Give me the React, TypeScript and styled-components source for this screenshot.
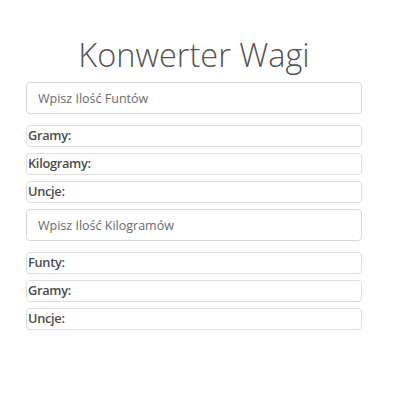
import styled, { createGlobalStyle } from 'styled-components'

const GlobalStyle = createGlobalStyle`
	body {
		margin: 0;
		background: #fff;
		font-family: 'Open Sans', 'Liberation Sans', sans-serif;
	}
`

const Page = styled.div`
	width: 336px;
	padding: 33px 0 0 26px;
	display: flex;
	flex-direction: column;
`

const Title = styled.h1`
	margin: 0 0 6px;
	text-align: center;
	font-weight: 300;
	font-size: 32.5px;
	line-height: 43px;
	color: #555;
`

const Section = styled.div`
	display: flex;
	flex-direction: column;
	gap: 6px;
	margin-bottom: 6px;
`

const Input = styled.input`
	box-sizing: border-box;
	height: 32px;
	width: 100%;
	margin-bottom: 5px;
	padding: 0 11px;
	border: 1px solid #d6d9dc;
	border-radius: 4px;
	font-family: inherit;
	font-size: 12.5px;
	color: #495057;
	&::placeholder {
		color: #666c72;
	}
`

const Result = styled.div`
	box-sizing: border-box;
	height: 22px;
	padding: 0 1px;
	border: 1px solid #dcdfe2;
	border-radius: 4px;
	font-size: 12.8px;
	font-weight: 600;
	letter-spacing: -0.3px;
	line-height: 19px;
	color: #4c4c4c;
`

const sections = [
	{ placeholder: 'Wpisz Ilość Funtów', results: ['Gramy:', 'Kilogramy:', 'Uncje:'] },
	{ placeholder: 'Wpisz Ilość Kilogramów', results: ['Funty:', 'Gramy:', 'Uncje:'] },
]

const App = () => (
	<>
		<GlobalStyle />
		<Page>
			<Title>Konwerter Wagi</Title>
			{sections.map((s) => (
				<Section key={s.placeholder}>
					<Input placeholder={s.placeholder} />
					{s.results.map((r) => (
						<Result key={r}>{r}</Result>
					))}
				</Section>
			))}
		</Page>
	</>
)

export default App
